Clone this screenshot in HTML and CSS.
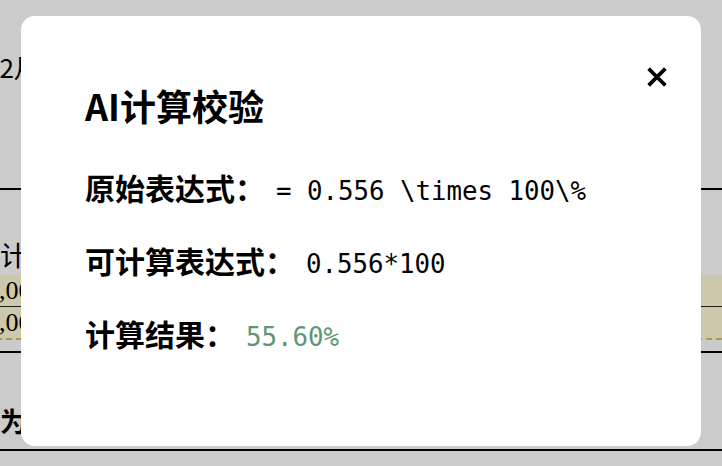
FILE: index.html
```html
<!DOCTYPE html>
<html lang="zh">
<head>
<meta charset="utf-8">
<link rel="stylesheet" href="styles.css">
</head>
<body>
<div class="page">
  <section class="band band-a">
    <div class="month">12月份报表</div>
    <div class="dots"><span>·</span><span>·</span></div>
  </section>
  <section class="band band-b">
    <div class="calc">合计</div>
    <div class="cell">1,000</div>
    <div class="cell cell-last">1,000</div>
  </section>
  <section class="band band-c">
    <div class="calc">认为</div>
  </section>
</div>
<div class="overlay"></div>
<div class="modal">
  <button class="close" aria-label="关闭">
    <svg viewBox="0 0 20 20" width="20" height="20"><path d="M3 3 L17 17 M17 3 L3 17" stroke="#000" stroke-width="3.8" stroke-linecap="square" fill="none"/></svg>
  </button>
  <h2 class="title">AI计算校验</h2>
  <div class="row"><span class="label">原始表达式<span class="colon">：</span></span><span class="code">= 0.556 \times 100\%</span></div>
  <div class="row"><span class="label">可计算表达式<span class="colon">：</span></span><span class="code">0.556*100</span></div>
  <div class="row"><span class="label">计算结果<span class="colon">：</span></span><span class="code result">55.60%</span></div>
</div>
</body>
</html>
```

FILE: styles.css
```css
html, body {
  margin: 0;
  padding: 0;
  background: #fff;
  overflow: hidden;
}
body {
  width: 722px;
  height: 466px;
  font-family: "Noto Sans CJK SC", "Noto Sans", sans-serif;
}
.page {
  display: flex;
  flex-direction: column;
}
.band {
  border-bottom: 2px solid #000;
  display: flex;
  flex-direction: column;
}
.band-a {
  height: 190px;
  padding-top: 50px;
  box-sizing: border-box;
}
.month {
  font-size: 26px;
  line-height: 34px;
  margin-left: -15px;
  white-space: nowrap;
}
.dots {
  display: flex;
  flex-direction: column;
  gap: 28px;
  margin-left: 19px;
  margin-top: 4px;
  color: #666;
  font-size: 16px;
  line-height: 20px;
}
.band-b {
  height: 163px;
  padding-top: 47px;
  box-sizing: border-box;
}
.calc {
  font-size: 27px;
  line-height: 36px;
  margin-left: -27px;
  white-space: nowrap;
}
.band-b .calc {
  margin-bottom: 2px;
}
.cell {
  height: 31px;
  background: #fffcd8;
  border-bottom: 1px solid #222;
  font-family: "Liberation Serif", serif;
  font-size: 26px;
  line-height: 31px;
  margin-left: -14px;
}
.cell-last {
  border-bottom: 2px dashed #d9c26a;
}
.band-c {
  height: 98px;
  padding-top: 50px;
  box-sizing: border-box;
}
.band-c .calc {
  font-weight: 700;
}
.overlay {
  position: fixed;
  inset: 0;
  background: rgba(0, 0, 0, 0.205);
}
.modal {
  position: fixed;
  left: 21px;
  top: 16px;
  width: 680px;
  height: 430px;
  box-sizing: border-box;
  background: #fff;
  border-radius: 14px;
  padding: 67px 64px 0;
  display: flex;
  flex-direction: column;
  gap: 33px;
}
.close {
  position: absolute;
  top: 51px;
  right: 34px;
  width: 20px;
  height: 20px;
  padding: 0;
  border: 0;
  background: none;
  display: flex;
}
.title {
  margin: 0 0 7px;
  font-size: 36px;
  line-height: 44px;
  font-weight: 700;
  color: #000;
}
.row {
  display: flex;
  align-items: baseline;
  line-height: 40px;
  height: 40px;
}
.label {
  font-size: 30px;
  font-weight: 700;
  color: #000;
}
.colon {
  font-family: "Noto Sans CJK TC", "Noto Sans CJK SC", sans-serif;
}
.code {
  font-family: "DejaVu Sans Mono", "Liberation Mono", monospace;
  font-size: 25.75px;
  color: #000;
  margin-left: 11px;
}
.result {
  color: #5d9674;
}
```
